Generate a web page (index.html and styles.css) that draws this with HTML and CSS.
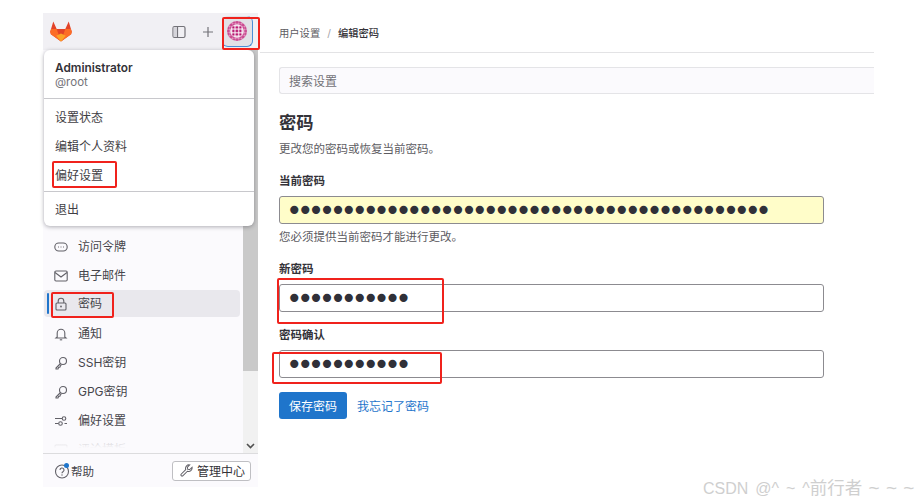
FILE: index.html
```html
<!DOCTYPE html>
<html>
<head>
<meta charset="UTF-8">
<title>编辑密码</title>
<link rel="stylesheet" href="styles.css">
</head>
<body>
<div class="page">

  <aside class="side">
    <div class="side-top">
      <svg class="logo" width="22" height="21" viewBox="0 0 22 21">
        <path fill="#e24329" d="M11 20.500 .9 13.200 .2 10.800 3.300 .6 6.700 8h8.600L18.700 .6l3.100 10.200-.7 2.400z"/>
        <path fill="#fc6d26" d="M11 20.500 6.700 8H1.200l-1 2.800.7 2.400z"/>
        <path fill="#fc6d26" d="M11 20.500 15.300 8h5.500l1 2.800-.7 2.400z"/>
        <path fill="#fca326" d="M11 20.500 6.200 14.800 11 12.600l4.800 2.200z"/>
      </svg>
      <svg class="top-icon panel-icon" width="14" height="14" viewBox="0 0 14 14" fill="none" stroke="#737278" stroke-width="1.200">
        <rect x="1" y="1.500" width="12" height="11" rx="1.500"/>
        <path d="M5.500 1.500v11"/>
        <rect x="1.600" y="2.100" width="3.400" height="9.800" fill="#d5d4da" stroke="none"/>
      </svg>
      <svg class="top-icon plus-icon" width="12" height="12" viewBox="0 0 12 12" stroke="#737278" stroke-width="1.200">
        <path d="M6 1v10M1 6h10"/>
      </svg>
      <div class="avatar-btn">
        <svg width="20" height="20" viewBox="0 0 20 20">
          <defs>
            <pattern id="dots" width="3" height="3" x="-.5" y="-.5" patternUnits="userSpaceOnUse">
              <circle cx="1.500" cy="1.500" r="1.250" fill="#b8146f"/>
            </pattern>
            <pattern id="cells" width="3.500" height="3.500" x="4.750" y="4.750" patternUnits="userSpaceOnUse">
              <rect x=".4" y=".4" width="2.400" height="2.400" rx=".5" fill="#b8146f"/>
            </pattern>
            <clipPath id="round"><circle cx="10" cy="10" r="10"/></clipPath>
          </defs>
          <circle cx="10" cy="10" r="10" fill="#f1c9de"/>
          <rect width="20" height="20" fill="url(#dots)" clip-path="url(#round)"/>
          <circle cx="10" cy="10" r="6.800" fill="#f8eef4"/>
          <rect x="4.750" y="4.750" width="10.500" height="10.500" fill="url(#cells)"/>
        </svg>
      </div>
    </div>

    <div class="side-body">
      <nav class="side-nav">
        <a class="nav-row">
          <svg width="14" height="14" viewBox="0 0 14 14" fill="none" stroke="#626168" stroke-width="1.100"><rect x=".8" y="3" width="12.400" height="8" rx="4"/><path d="M4 7h.6M6.700 7h.6M9.400 7h.6" stroke-width="1.400"/></svg>
          访问令牌
        </a>
        <a class="nav-row">
          <svg width="14" height="14" viewBox="0 0 14 14" fill="none" stroke="#626168" stroke-width="1.100"><rect x=".8" y="2" width="12.400" height="10" rx="1.200"/><path d="M1 3.500l6 4.500 6-4.500"/></svg>
          电子邮件
        </a>
        <a class="nav-row nav-active">
          <svg width="14" height="14" viewBox="0 0 14 14" fill="none" stroke="#626168" stroke-width="1.100"><rect x="2" y="6" width="10" height="7" rx="1"/><path d="M4.200 6V4a2.800 2.800 0 0 1 5.600 0v2"/><circle cx="7" cy="9.500" r=".9" fill="#626168" stroke="none"/></svg>
          密码
        </a>
        <a class="nav-row">
          <svg width="14" height="14" viewBox="0 0 14 14" fill="none" stroke="#626168" stroke-width="1.100"><path d="M3.200 10V6a3.800 3.800 0 0 1 7.600 0v4l1.200 1H2z"/><path d="M5.800 12.800h2.400"/></svg>
          通知
        </a>
        <a class="nav-row">
          <svg width="14" height="14" viewBox="0 0 14 14" fill="none" stroke="#626168" stroke-width="1.100"><circle cx="9" cy="5" r="3.500"/><path d="M6.500 7.500 2 12v1h2l.6-1.500 1.400-.5.500-1.500 1-.6"/></svg>
          SSH密钥
        </a>
        <a class="nav-row">
          <svg width="14" height="14" viewBox="0 0 14 14" fill="none" stroke="#626168" stroke-width="1.100"><circle cx="9" cy="5" r="3.500"/><path d="M6.500 7.500 2 12v1h2l.6-1.500 1.400-.5.500-1.500 1-.6"/></svg>
          GPG密钥
        </a>
        <a class="nav-row">
          <svg width="14" height="14" viewBox="0 0 14 14" fill="none" stroke="#626168" stroke-width="1.100"><path d="M1 4.500h7M10.500 9.500H13M1 9.500h3.500"/><circle cx="10" cy="4.500" r="1.800"/><circle cx="6.500" cy="9.500" r="1.800"/></svg>
          偏好设置
        </a>
        <a class="nav-row">
          <svg width="14" height="14" viewBox="0 0 14 14" fill="none" stroke="#626168" stroke-width="1.100"><rect x="1" y="2" width="12" height="10" rx="1"/><path d="M4 5.500h6M4 8.500h6"/></svg>
          评论模板
        </a>
        <div class="nav-fade"></div>
      </nav>
      <div class="scroll">
        <div class="scroll-thumb"></div>
        <svg class="scroll-arrow" width="9" height="6" viewBox="0 0 9 6" fill="none" stroke="#505050" stroke-width="1.600"><path d="M1 1l3.500 3.500L8 1"/></svg>
      </div>
    </div>

    <div class="side-foot">
      <div class="help">
        <svg width="16" height="16" viewBox="0 0 16 16" fill="none" stroke="#626168" stroke-width="1.100"><circle cx="8" cy="8.500" r="6.500"/><path d="M6 7a2 2 0 1 1 3 1.700c-.7.400-1 .8-1 1.500"/><circle cx="8" cy="12" r=".7" fill="#626168" stroke="none"/></svg>
        <i class="help-dot"></i>
        帮助
      </div>
      <button class="admin-btn">
        <svg width="13" height="13" viewBox="0 0 14 14" fill="none" stroke="#626168" stroke-width="1.100"><path d="M13 3.500 10.500 6 8.300 5.700 8 3.500 10.500 1a3.800 3.800 0 0 0-4.300 5L1.200 11a1.300 1.300 0 0 0 1.800 1.800l5-5a3.800 3.800 0 0 0 5-4.300z"/></svg>
        管理中心
      </button>
    </div>
  </aside>

  <main class="main">
    <div class="crumbs">
      <span>用户设置</span><span class="crumb-sep">/</span><b>编辑密码</b>
    </div>
    <div class="search">搜索设置</div>
    <h2 class="title">密码</h2>
    <p class="sub">更改您的密码或恢复当前密码。</p>

    <label class="lbl lbl-first">当前密码</label>
    <input class="pw pw-saved" type="password" value="00000000000000000000000000000000000000000000">
    <p class="hint">您必须提供当前密码才能进行更改。</p>

    <label class="lbl lbl-new">新密码</label>
    <input class="pw" type="password" value="00000000000">

    <label class="lbl lbl-confirm">密码确认</label>
    <input class="pw" type="password" value="00000000000">

    <div class="actions">
      <button class="save">保存密码</button>
      <a class="forgot">我忘记了密码</a>
    </div>
  </main>

  <div class="menu">
    <div class="menu-head">
      <strong>Administrator</strong>
      <span>@root</span>
    </div>
    <div class="menu-group">
      <a>设置状态</a>
      <a>编辑个人资料</a>
      <a>偏好设置</a>
    </div>
    <div class="menu-group menu-last">
      <a>退出</a>
    </div>
  </div>

  <!-- 截图上的红框标注 -->
  <div class="mark mark-avatar"></div>
  <div class="mark mark-pref"></div>
  <div class="mark mark-nav"></div>
  <div class="mark mark-new"></div>
  <div class="mark mark-confirm"></div>

  <div class="watermark">CSDN @^ ~ ^<span class="wm-cjk">前行者</span><span class="wm-tail"> ~ ~ ~</span></div>
</div>
</body>
</html>
```

FILE: styles.css
```css
*{ margin: 0; padding: 0; box-sizing: border-box; }
html,body{ height: 100%; background: #fff; overflow: hidden; }
body{ color: #333238; font-family: "Inter", "Noto Sans CJK SC", sans-serif; font-size: 12px; }
a{ text-decoration: none; color: inherit; }

.page{ position: relative; display: flex; width: 919px; height: 502px; padding: 13px 45px 15px 43px; }

/* 左侧栏 */
.side{ display: flex; flex-direction: column; width: 215px; background: #fbfafd; }
.side-top{ display: flex; align-items: center; height: 37px; padding: 0 5px 0 7px; background: #f1f0f4; }
.logo{ margin-right: 100px; }
.top-icon{ flex: none; }
.panel-icon{ margin-left: 0; }
.plus-icon{ margin-left: 16px; }
.avatar-btn{
  display: flex; align-items: center; justify-content: center;
  width: 31px; height: 31px; margin-left: 8px; border-radius: 6px;
  background: #e2e1e6; border-right: 1px solid #4b8fd6; border-bottom: 1px solid #4b8fd6;
}
.side-body{ flex: 1; display: flex; min-height: 0; }
.side-nav{ position: relative; flex: 1; padding: 182px 3px 0 1px; overflow: hidden; }
.nav-row{ display: flex; align-items: center; gap: 10px; height: 29px; padding-left: 8px; color: #46454b; line-height: 1; }
.nav-row svg{ flex: none; margin-left: 2px; }
.nav-active{
  position: relative; height: 27px; margin-bottom: 2px; border-radius: 4px; background: #e9e8ed;
}
.nav-active:before{
  content: ""; position: absolute; left: 3px; top: 3px; bottom: 3px; width: 2px;
  border-radius: 2px; background: #1f75cb;
}
.nav-fade{
  position: absolute; left: 0; right: 0; bottom: 0; height: 24px;
  background: linear-gradient(to bottom, rgba(251,250,253,.35), #fbfafd 80%);
}
.scroll{ position: relative; flex: none; width: 15px; background: #f1f1f1; }
.scroll-thumb{ height: 321px; background: #c9c9c9; }
.scroll-arrow{ position: absolute; left: 3px; bottom: 4px; }

.side-foot{
  display: flex; align-items: center; justify-content: space-between;
  height: 34px; padding: 0 7px 0 11px; border-top: 1px solid #dcdcde; background: #fbfafd;
}
.help{ position: relative; display: flex; align-items: center; gap: 1px; font-size: 11.500px; color: #46454b; }
.help-dot{ position: absolute; left: 10px; top: 0; width: 5px; height: 5px; border-radius: 50%; background: #1f75cb; }
.admin-btn{
  display: flex; align-items: center; gap: 4px; width: 79px; height: 20px; padding-left: 7px;
  background: #fff; border: 1px solid #bfbfc3; border-radius: 3px;
  font: 12px "Inter", "Noto Sans CJK SC", sans-serif; color: #333238;
}

/* 右侧内容 */
.main{ flex: 1; display: flex; flex-direction: column; align-items: flex-start; padding-left: 21px; }
.crumbs{
  align-self: stretch; height: 40px; margin-left: -19px; padding: 14px 0 0 19px;
  border-bottom: 1px solid #e3e3e5; font-size: 10.300px; line-height: 13px; color: #5c5b61;
}
.crumbs b{ color: #333238; font-weight: 500; }
.crumb-sep{ margin: 0 7px; color: #a4a3a8; }
.search{
  align-self: stretch; height: 27px; margin-top: 14px; padding: 1px 0 0 9px;
  background: #fbfafd; border: 1px solid #e4e4e7; border-right: 0; border-radius: 3px 0 0 3px;
  line-height: 25px; color: #737278;
}
.title{ margin-top: 17px; font-size: 17.300px; line-height: 24px; font-weight: 700; color: #333238; }
.sub{ margin-top: 6px; font-size: 11.500px; line-height: 16px; color: #5c5b61; }
.lbl{ display: block; font-size: 11.500px; line-height: 16px; font-weight: 600; color: #333238; }
.lbl-first{ margin-top: 16px; }
.lbl-new{ margin-top: 16px; }
.lbl-confirm{ margin-top: 15px; }
.pw{
  display: block; width: 545px; height: 28px; margin-top: 7px; padding: 0 6px;
  border: 1px solid #8c8b90; border-radius: 3px; background: #fff; outline: 0;
  font-family: "DejaVu Sans", sans-serif; font-size: 28px; letter-spacing: -5.600px; color: #303038;
}
.pw-saved{ background: #fffdc9; margin-top: 7px; }
.hint{ margin-top: 5px; font-size: 11.500px; line-height: 16px; color: #5c5b61; }
.actions{ display: flex; align-items: center; gap: 10px; margin-top: 14px; }
.save{
  width: 68px; height: 27px; border: 0; border-radius: 3px; background: #1f75cb; color: #fff;
  font: 12px "Inter", "Noto Sans CJK SC", sans-serif;
}
.forgot{ color: #1f75cb; }

/* 用户下拉菜单 */
.menu{
  position: absolute; left: 44px; top: 50px; width: 210px; height: 176px;
  background: #fff; border-radius: 6px; box-shadow: 0 1px 4px rgba(30,30,40,.35);
}
.menu-head{ height: 49px; padding: 11px 11px 0; border-bottom: 1px solid #c8c8cc; }
.menu-head strong{ display: block; font-size: 11.800px; line-height: 14px; font-weight: 600; color: #333238; }
.menu-head span{ display: block; font-size: 11.500px; line-height: 14px; color: #737278; }
.menu-group{ height: 93px; padding-top: 4px; border-bottom: 1px solid #c8c8cc; }
.menu-group a{ display: block; height: 29px; padding-left: 11px; line-height: 29px; color: #3f3e44; }
.menu-last{ height: 34px; padding-top: 3px; border-bottom: 0; }

/* 红框 */
.mark{ position: absolute; border: 2px solid #f0221c; border-radius: 2px; }
.mark-avatar{ left: 222px; top: 17px; width: 38px; height: 33px; }
.mark-pref{ left: 52px; top: 161px; width: 65px; height: 27px; }
.mark-nav{ left: 51px; top: 292px; width: 63px; height: 26px; }
.mark-new{ left: 277px; top: 278px; width: 167px; height: 46px; }
.mark-confirm{ left: 272px; top: 352px; width: 170px; height: 32px; }

.watermark{
  position: absolute; left: 703px; top: 477px; white-space: nowrap; word-spacing: 2.500px;
  font-family: "Liberation Sans", "Noto Sans CJK SC", sans-serif; font-size: 16px; line-height: 22px; color: #cfcfcf;
}
.wm-cjk{ font-size: 17.500px; }
.wm-tail{ font-size: 19px; word-spacing: 1px; }
```
